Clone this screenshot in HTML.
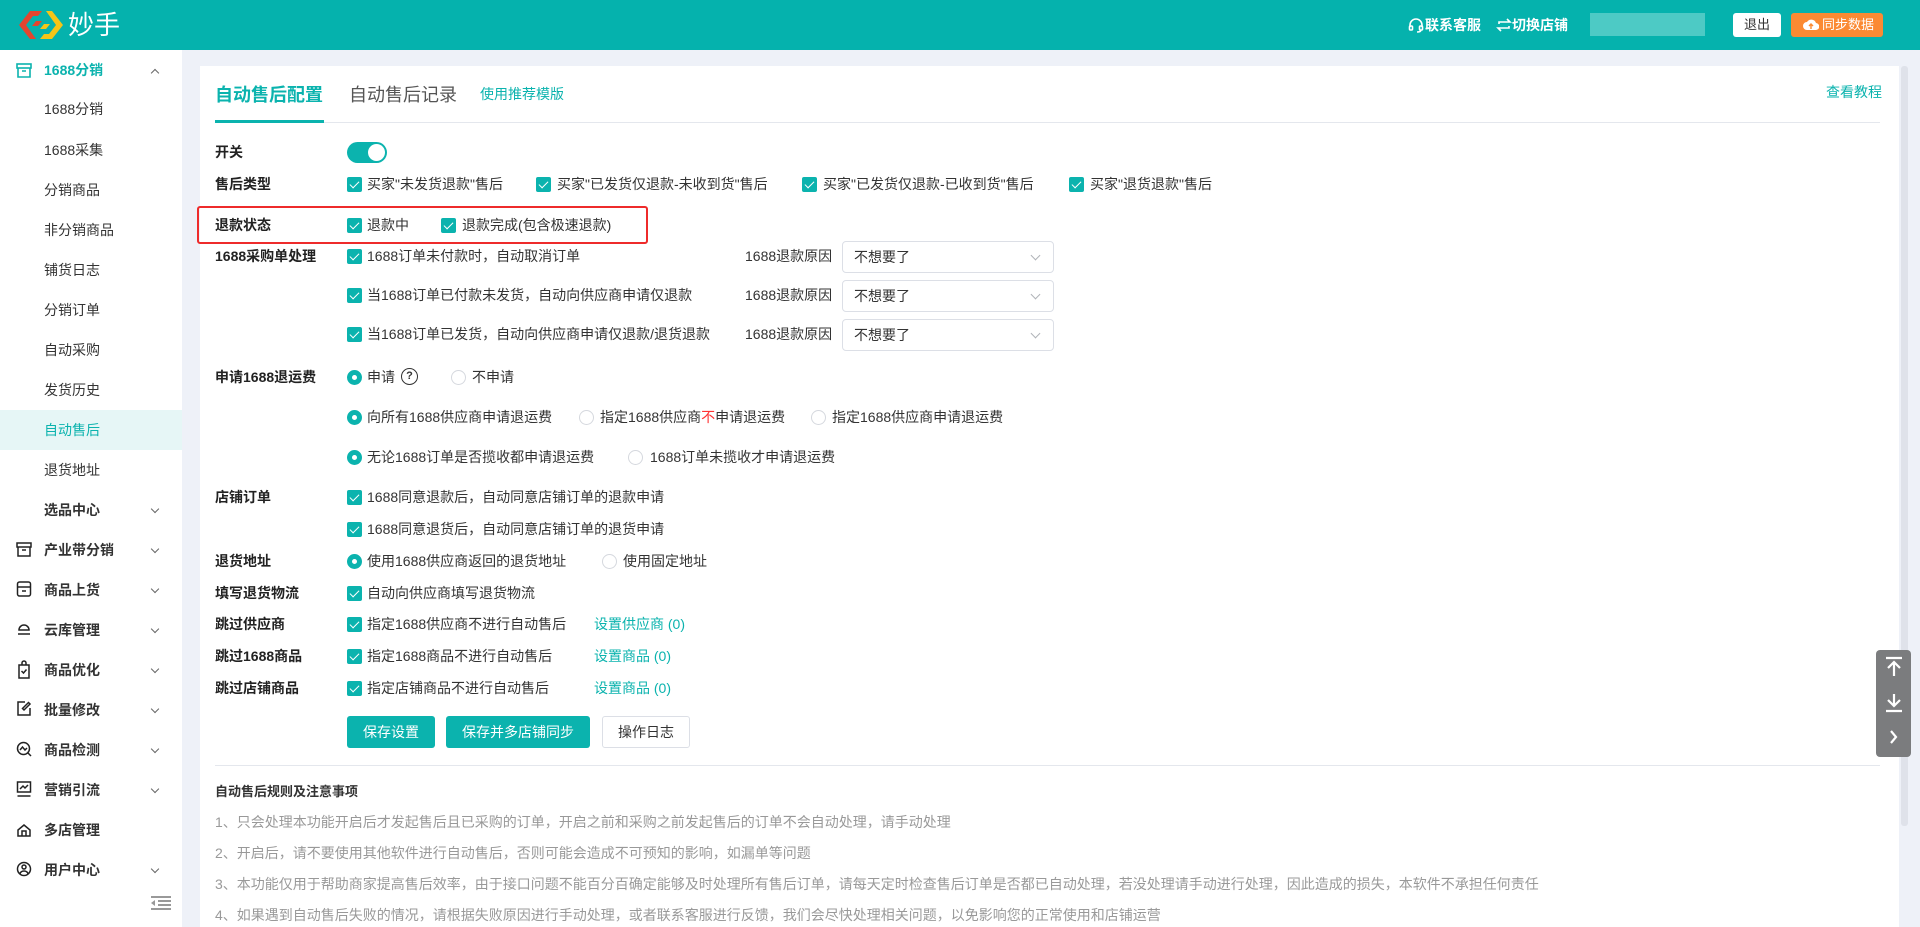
<!DOCTYPE html>
<html><head><meta charset="utf-8"><style>
*{margin:0;padding:0;box-sizing:border-box}
body{width:1920px;height:927px;overflow:hidden;background:#eef1f8;font-family:"Liberation Sans","Noto Sans CJK SC",sans-serif;font-size:14px;color:#333;position:relative}
.a{position:absolute;white-space:nowrap;line-height:20px}
.hd{position:absolute;left:0;top:0;width:1920px;height:50px;background:#05b2ad}
.sb{position:absolute;left:0;top:50px;width:182px;height:877px;background:#fff}
.card{position:absolute;left:200px;top:66px;width:1699px;height:861px;background:#fff}
.cb{position:absolute;width:15px;height:15px;background:#0bb3ae;border-radius:2px}
.cb:after{content:"";position:absolute;left:5px;top:2px;width:4px;height:8px;border:solid #fff;border-width:0 1.5px 1.5px 0;transform:rotate(45deg)}
.rd{position:absolute;width:15px;height:15px;border-radius:50%;border:1px solid #d5d8de;background:#fff}
.rd.on{border:5px solid #0bb3ae}
.lb{font-weight:bold;color:#222}
.sel{position:absolute;width:212px;height:32px;border:1px solid #dcdfe6;border-radius:4px;padding-left:11px;line-height:30px;color:#333}
.sel:after{content:"";position:absolute;right:14px;top:10px;width:6px;height:6px;border:solid #b0b3b8;border-width:0 1px 1px 0;transform:rotate(45deg)}
.si{position:absolute;left:44px;line-height:20px;color:#333}
.chev{position:absolute;left:152px;width:6px;height:6px;border:solid #666;border-width:0 1px 1px 0;transform:rotate(45deg)}
.btn{position:absolute;top:716px;height:32px;border-radius:3px;line-height:32px;text-align:center;font-size:14px}
.tc{color:#0bb3ae}
.g{color:#999}
</style></head><body>
<div class="hd"></div>
<svg style="position:absolute;left:16px;top:8px" width="50" height="34" viewBox="0 0 50 34"><path d="M14 3 L3 17 L14 31 L20 31 L10 17 L17 8 L22 8 L26 3Z" fill="#e3452f"/><path d="M20 13 L26 13 L22 18 L16 18Z" fill="#e3452f"/><path d="M36 31 L47 17 L36 3 L30 3 L40 17 L33 26 L28 26 L24 31Z" fill="#f5c518"/><path d="M30 21 L24 21 L28 16 L34 16Z" fill="#f5c518"/></svg>
<div class="a" style="left:68px;top:9px;font-size:26px;line-height:32px;color:#fff">妙手</div>
<svg style="position:absolute;left:1408px;top:17px" width="16" height="16" viewBox="0 0 16 16" fill="none" stroke="#fff" stroke-width="1.6"><path d="M2 10V8a6 6 0 0 1 12 0v2"/><rect x="1.5" y="9" width="3" height="4" rx="1"/><rect x="11.5" y="9" width="3" height="4" rx="1"/><path d="M13 13q0 2-4 2"/></svg>
<div class="a" style="left:1425px;top:15px;color:#fff;font-size:14px;font-weight:bold">联系客服</div>
<svg style="position:absolute;left:1496px;top:18px" width="16" height="14" viewBox="0 0 16 14" fill="none" stroke="#fff" stroke-width="1.6"><path d="M3 6V4h11l-3-3"/><path d="M13 8v2H2l3 3"/></svg>
<div class="a" style="left:1512px;top:15px;color:#fff;font-size:14px;font-weight:bold">切换店铺</div>
<div style="position:absolute;left:1590px;top:13px;width:115px;height:23px;background:#5fcfca;opacity:.8"></div>
<div style="position:absolute;left:1733px;top:13px;width:48px;height:24px;background:#fff;border-radius:3px;line-height:24px;text-align:center;font-size:13px;color:#333">退出</div>
<div style="position:absolute;left:1791px;top:13px;width:92px;height:24px;background:#fb8a33;border-radius:3px;line-height:24px;color:#fff;font-size:13px;padding-left:31px">同步数据</div>
<svg style="position:absolute;left:1803px;top:18px" width="16" height="13" viewBox="0 0 16 13"><path d="M4 12a4 4 0 0 1 0-8 5 5 0 0 1 9 1 3.5 3.5 0 0 1-.5 7z" fill="#fff"/><path d="M8 11V6M6 8l2-2 2 2" stroke="#fb8a33" stroke-width="1.4" fill="none"/></svg>

<div class="sb"></div>
<svg style="position:absolute;left:16px;top:63px" width="16" height="15" viewBox="0 0 16 15" fill="none" stroke="#0bb3ae" stroke-width="1.6"><rect x="1" y="1" width="14" height="4"/><path d="M2 5v9h12V5M6 8h4"/></svg>
<div class="si" style="top:60px;font-weight:bold;color:#0bb3ae">1688分销</div>
<div class="chev" style="top:70px;transform:rotate(225deg);border-color:#666"></div>
<div class="si" style="top:99px">1688分销</div>
<div class="si" style="top:140px">1688采集</div>
<div class="si" style="top:180px">分销商品</div>
<div class="si" style="top:220px">非分销商品</div>
<div class="si" style="top:260px">铺货日志</div>
<div class="si" style="top:300px">分销订单</div>
<div class="si" style="top:340px">自动采购</div>
<div class="si" style="top:380px">发货历史</div>
<div style="position:absolute;left:0;top:410px;width:182px;height:40px;background:#e6f6f6"></div>
<div class="si" style="top:420px;color:#0bb3ae">自动售后</div>
<div class="si" style="top:460px">退货地址</div>
<div class="si" style="top:500px;font-weight:bold">选品中心</div><div class="chev" style="top:506px"></div>
<div class="si" style="top:540px;font-weight:bold">产业带分销</div><div class="chev" style="top:546px"></div>
<div class="si" style="top:580px;font-weight:bold">商品上货</div><div class="chev" style="top:586px"></div>
<div class="si" style="top:620px;font-weight:bold">云库管理</div><div class="chev" style="top:626px"></div>
<div class="si" style="top:660px;font-weight:bold">商品优化</div><div class="chev" style="top:666px"></div>
<div class="si" style="top:700px;font-weight:bold">批量修改</div><div class="chev" style="top:706px"></div>
<div class="si" style="top:740px;font-weight:bold">商品检测</div><div class="chev" style="top:746px"></div>
<div class="si" style="top:780px;font-weight:bold">营销引流</div><div class="chev" style="top:786px"></div>
<div class="si" style="top:820px;font-weight:bold">多店管理</div>
<div class="si" style="top:860px;font-weight:bold">用户中心</div><div class="chev" style="top:866px"></div>
<svg style="position:absolute;left:16px;top:542px" width="16" height="200" viewBox="0 0 16 200" fill="none" stroke="#222" stroke-width="1.5">
<rect x="1" y="1" width="14" height="4"/><path d="M2 5v9h12V5M6 8h4"/>
<rect x="1.5" y="40" width="13" height="14" rx="2"/><path d="M1.5 45h13M6 49h4"/>
<path d="M3 88a5 5 0 0 1 10 0zM2 92h12"/>
<path d="M3 123h10v13H3zM6 123v-2a2 2 0 0 1 4 0v2M5.5 129l2 2 3-3.5"/>
<path d="M14 166v7H2V160h7M8 168l6-6-1.5-1.5-6 6z"/>
</svg>
<svg style="position:absolute;left:16px;top:741px" width="16" height="140" viewBox="0 0 16 140" fill="none" stroke="#222" stroke-width="1.5">
<circle cx="7.5" cy="7.5" r="6"/><path d="M4 9l2.5-3 2.5 3 2-2M12 12l3 3"/>
<rect x="1.5" y="41" width="13" height="10"/><path d="M1.5 55h13M4 48l3-3 2 2 3-3"/>
<path d="M2 95v-6l6-5 6 5v6zM6 95v-5h4v5"/>
<circle cx="8" cy="128" r="6.5"/><circle cx="8" cy="126" r="2"/><path d="M4 133a4 3 0 0 1 8 0"/>
</svg>
<svg style="position:absolute;left:151px;top:896px" width="20" height="14" viewBox="0 0 20 14" fill="#999"><rect x="0" y="0" width="20" height="2"/><rect x="7" y="4" width="13" height="2"/><rect x="7" y="8" width="13" height="2"/><rect x="0" y="12" width="20" height="2"/><path d="M0 7l4-3v6z"/></svg>

<div class="card"></div>
<div style="position:absolute;left:1901px;top:66px;width:7px;height:760px;background:#dfe2ea;border-radius:3px"></div>
<div class="a" style="left:215px;top:83px;font-size:18px;line-height:24px;font-weight:bold;color:#0bb3ae">自动售后配置</div>
<div class="a" style="left:349px;top:83px;font-size:18px;line-height:24px;color:#555">自动售后记录</div>
<div class="a tc" style="left:480px;top:84px;font-size:14px">使用推荐模版</div>
<div class="a tc" style="left:1826px;top:82px">查看教程</div>
<div style="position:absolute;left:215px;top:122px;width:1665px;height:1px;background:#e4e7ed"></div>
<div style="position:absolute;left:215px;top:120px;width:109px;height:3px;background:#0bb3ae"></div>

<div class="a lb" style="left:215px;top:142px">开关</div>
<div style="position:absolute;left:347px;top:142px;width:40px;height:21px;border-radius:11px;background:#0bb3ae"></div>
<div style="position:absolute;left:368px;top:144px;width:17px;height:17px;border-radius:50%;background:#fff"></div>

<div class="a lb" style="left:215px;top:174px">售后类型</div>
<div class="cb" style="left:347px;top:177px"></div><div class="a" style="left:367px;top:174px">买家"未发货退款"售后</div>
<div class="cb" style="left:536px;top:177px"></div><div class="a" style="left:557px;top:174px">买家"已发货仅退款-未收到货"售后</div>
<div class="cb" style="left:802px;top:177px"></div><div class="a" style="left:823px;top:174px">买家"已发货仅退款-已收到货"售后</div>
<div class="cb" style="left:1069px;top:177px"></div><div class="a" style="left:1090px;top:174px">买家"退货退款"售后</div>

<div style="position:absolute;left:197px;top:206px;width:451px;height:38px;border:2px solid #ee2b2b;border-radius:3px"></div>
<div class="a lb" style="left:215px;top:215px">退款状态</div>
<div class="cb" style="left:347px;top:218px"></div><div class="a" style="left:367px;top:215px">退款中</div>
<div class="cb" style="left:441px;top:218px"></div><div class="a" style="left:462px;top:215px">退款完成(包含极速退款)</div>

<div class="a lb" style="left:215px;top:246px">1688采购单处理</div>
<div class="cb" style="left:347px;top:249px"></div><div class="a" style="left:367px;top:246px">1688订单未付款时，自动取消订单</div>
<div class="a" style="left:745px;top:246px">1688退款原因</div><div class="sel" style="left:842px;top:241px">不想要了</div>
<div class="cb" style="left:347px;top:288px"></div><div class="a" style="left:367px;top:285px">当1688订单已付款未发货，自动向供应商申请仅退款</div>
<div class="a" style="left:745px;top:285px">1688退款原因</div><div class="sel" style="left:842px;top:280px">不想要了</div>
<div class="cb" style="left:347px;top:327px"></div><div class="a" style="left:367px;top:324px">当1688订单已发货，自动向供应商申请仅退款/退货退款</div>
<div class="a" style="left:745px;top:324px">1688退款原因</div><div class="sel" style="left:842px;top:319px">不想要了</div>

<div class="a lb" style="left:215px;top:367px">申请1688退运费</div>
<div class="rd on" style="left:347px;top:370px"></div><div class="a" style="left:367px;top:367px">申请</div>
<div style="position:absolute;left:401px;top:368px;width:17px;height:17px;border:1.5px solid #333;border-radius:50%;font-size:11px;line-height:14px;text-align:center;font-weight:bold">?</div>
<div class="rd" style="left:451px;top:370px"></div><div class="a" style="left:472px;top:367px">不申请</div>
<div class="rd on" style="left:347px;top:410px"></div><div class="a" style="left:367px;top:407px">向所有1688供应商申请退运费</div>
<div class="rd" style="left:579px;top:410px"></div><div class="a" style="left:600px;top:407px">指定1688供应商<span style="color:#f33">不</span>申请退运费</div>
<div class="rd" style="left:811px;top:410px"></div><div class="a" style="left:832px;top:407px">指定1688供应商申请退运费</div>
<div class="rd on" style="left:347px;top:450px"></div><div class="a" style="left:367px;top:447px">无论1688订单是否揽收都申请退运费</div>
<div class="rd" style="left:628px;top:450px"></div><div class="a" style="left:650px;top:447px">1688订单未揽收才申请退运费</div>

<div class="a lb" style="left:215px;top:487px">店铺订单</div>
<div class="cb" style="left:347px;top:490px"></div><div class="a" style="left:367px;top:487px">1688同意退款后，自动同意店铺订单的退款申请</div>
<div class="cb" style="left:347px;top:522px"></div><div class="a" style="left:367px;top:519px">1688同意退货后，自动同意店铺订单的退货申请</div>

<div class="a lb" style="left:215px;top:551px">退货地址</div>
<div class="rd on" style="left:347px;top:554px"></div><div class="a" style="left:367px;top:551px">使用1688供应商返回的退货地址</div>
<div class="rd" style="left:602px;top:554px"></div><div class="a" style="left:623px;top:551px">使用固定地址</div>

<div class="a lb" style="left:215px;top:583px">填写退货物流</div>
<div class="cb" style="left:347px;top:586px"></div><div class="a" style="left:367px;top:583px">自动向供应商填写退货物流</div>

<div class="a lb" style="left:215px;top:614px">跳过供应商</div>
<div class="cb" style="left:347px;top:617px"></div><div class="a" style="left:367px;top:614px">指定1688供应商不进行自动售后</div><div class="a tc" style="left:594px;top:614px">设置供应商 (0)</div>
<div class="a lb" style="left:215px;top:646px">跳过1688商品</div>
<div class="cb" style="left:347px;top:649px"></div><div class="a" style="left:367px;top:646px">指定1688商品不进行自动售后</div><div class="a tc" style="left:594px;top:646px">设置商品 (0)</div>
<div class="a lb" style="left:215px;top:678px">跳过店铺商品</div>
<div class="cb" style="left:347px;top:681px"></div><div class="a" style="left:367px;top:678px">指定店铺商品不进行自动售后</div><div class="a tc" style="left:594px;top:678px">设置商品 (0)</div>

<div class="btn" style="left:347px;width:88px;background:#0bb3ae;color:#fff">保存设置</div>
<div class="btn" style="left:446px;width:144px;background:#0bb3ae;color:#fff">保存并多店铺同步</div>
<div class="btn" style="left:602px;width:88px;border:1px solid #dcdfe6;color:#333;line-height:30px">操作日志</div>

<div style="position:absolute;left:215px;top:765px;width:1665px;height:1px;background:#e4e7ed"></div>
<div class="a lb" style="left:215px;top:782px;font-size:13px;color:#333">自动售后规则及注意事项</div>
<div class="a g" style="left:215px;top:812px">1、只会处理本功能开启后才发起售后且已采购的订单，开启之前和采购之前发起售后的订单不会自动处理，请手动处理</div>
<div class="a g" style="left:215px;top:843px">2、开启后，请不要使用其他软件进行自动售后，否则可能会造成不可预知的影响，如漏单等问题</div>
<div class="a g" style="left:215px;top:874px">3、本功能仅用于帮助商家提高售后效率，由于接口问题不能百分百确定能够及时处理所有售后订单，请每天定时检查售后订单是否都已自动处理，若没处理请手动进行处理，因此造成的损失，本软件不承担任何责任</div>
<div class="a g" style="left:215px;top:905px">4、如果遇到自动售后失败的情况，请根据失败原因进行手动处理，或者联系客服进行反馈，我们会尽快处理相关问题，以免影响您的正常使用和店铺运营</div>

<div style="position:absolute;left:1876px;top:650px;width:35px;height:107px;background:#7b7c7e;border-radius:4px"></div>
<svg style="position:absolute;left:1884px;top:656px" width="20" height="96" viewBox="0 0 20 96" fill="none" stroke="#fff" stroke-width="2.2"><path d="M2 2h16M10 20V7M4 12l6-6 6 6"/><path d="M10 38v12M4 44l6 6 6-6M2 55h16"/><path d="M7 75l5 6-5 6"/></svg>
</body></html>
